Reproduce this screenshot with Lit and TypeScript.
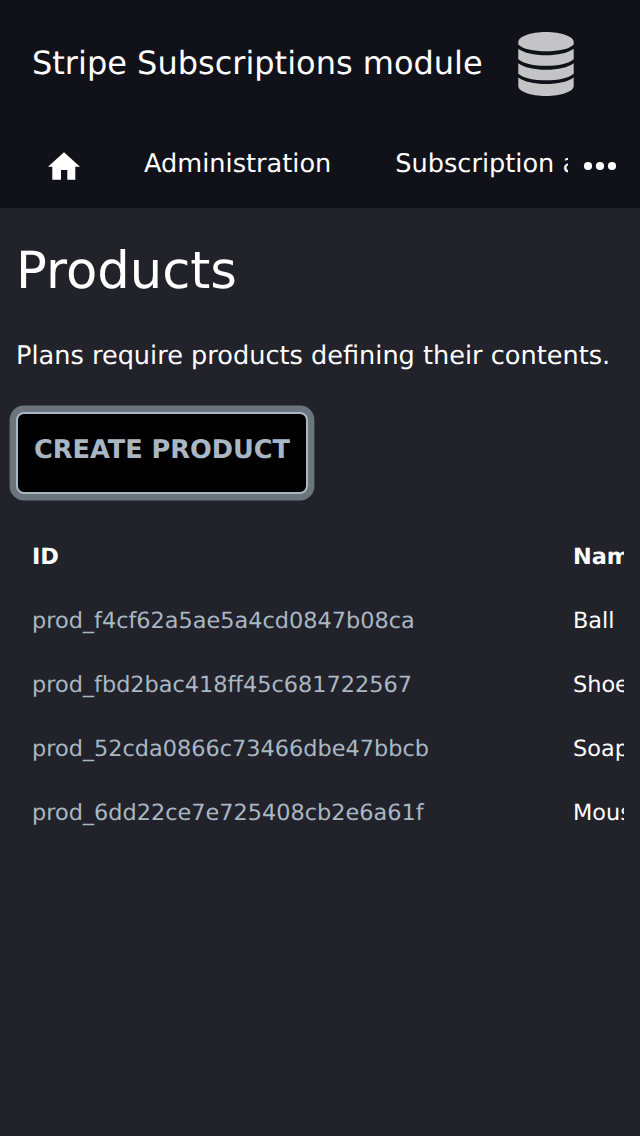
import { LitElement, html, css } from "lit";
import { customElement } from "lit/decorators.js";

const products = [
  ["prod_f4cf62a5ae5a4cd0847b08ca", "Ball"],
  ["prod_fbd2bac418ff45c681722567", "Shoes"],
  ["prod_52cda0866c73466dbe47bbcb", "Soap"],
  ["prod_6dd22ce7e725408cb2e6a61f", "Mouse"],
];

@customElement("app-root")
export class AppRoot extends LitElement {
  static styles = css`
    :host { display: block; height: 1136px; overflow: hidden; background: #22222a; color: #fff; font-family: "DejaVu Sans", sans-serif; text-rendering: geometricPrecision; }
    * { box-sizing: border-box; }
    header { background: #11111a; height: 208px; }
    .top { display: flex; height: 128px; padding: 0 66px 0 32px; justify-content: space-between; align-items: center; font-size: 32px; white-space: nowrap; }
    .title { padding-bottom: 2px; }
    .db { width: 56px; height: 64px; display: block; }
    nav { display: flex; height: 80px; font-size: 25.6px; line-height: 72px; white-space: nowrap; }
    .home { width: 144px; padding: 20px 0 0 44px; flex: none; }
    .home svg { display: block; width: 40px; height: 36px; }
    .links { display: flex; gap: 64px; width: 424px; flex: none; overflow: hidden; }
    .more { padding: 28px 0 0 12px; line-height: 0; }
    main { padding: 33px 16px; }
    h1 { margin: 0; font-size: 51.2px; line-height: 60px; font-weight: 400; }
    p { margin: 38px 0 0; font-size: 25.6px; line-height: 34px; white-space: nowrap; }
    button { display: block; margin-top: 39px; width: 292px; height: 82px; padding: 0 0 6px; border: 2px solid #a9b7c4; border-radius: 8px; background: #000; color: #a9b7c4; font: bold 25.6px "DejaVu Sans", sans-serif; text-rendering: inherit; text-align: center; white-space: nowrap; box-shadow: 0 0 0 6.4px #6c757d; }
    .table { margin-top: 31px; overflow: hidden; font-size: 22.4px; }
    .row { display: grid; grid-template-columns: 541px 200px; line-height: 64px; height: 64px; }
    .row span { padding-left: 16px; }
    .head { font-weight: bold; }
    .id { color: #a9b7c4; }
  `;

  render() {
    return html`
      <header>
        <div class="top">
          <span class="title">Stripe Subscriptions module</span>
          <svg class="db" viewBox="0 0 56 64" fill="#c4c4c6">
            <path d="M.3 10C.3 4.500 12.700 0 28 0s27.700 4.500 27.700 10v2.500C51.500 17 40.500 19.300 28 19.300S4.500 17 .3 12.500z"/>
            <path d="M.3 16.700C6 21 16 23.200 28 23.200s22-2.200 27.700-6.500v10.500C50.500 31.800 40 33.700 28 33.700S5.500 31.800.3 27.200z"/>
            <path d="M.3 31.200C6 35.500 16 37.700 28 37.700s22-2.200 27.700-6.500v10.500C50.500 46.300 40 48.200 28 48.200S5.500 46.300.3 41.700z"/>
            <path d="M.3 45.500C6 49.800 16 52 28 52s22-2.200 27.700-6.500V54C55.700 59.500 43.300 64 28 64S.3 59.500.3 54z"/>
          </svg>
        </div>
        <nav>
          <div class="home"><svg viewBox="0 0 40 36" fill="#fff"><path d="M20 4.300 36 18.700h-4.700v13h-8V22H17v9.700H8.300v-13H4z"/></svg></div>
          <div class="links"><span>Administration</span><span>Subscription administration</span></div>
          <div class="more"><svg width="40" height="20" viewBox="0 0 40 20" fill="#fff"><circle cx="8" cy="10" r="4.100"/><circle cx="20" cy="10" r="4.100"/><circle cx="32" cy="10" r="4.100"/></svg></div>
        </nav>
      </header>
      <main>
        <h1>Products</h1>
        <p>Plans require products defining their contents.</p>
        <button>CREATE PRODUCT</button>
        <div class="table">
          <div class="row head"><span>ID</span><span>Name</span></div>
          ${products.map(([id, name]) => html`<div class="row"><span class="id">${id}</span><span>${name}</span></div>`)}
        </div>
      </main>
    `;
  }
}
